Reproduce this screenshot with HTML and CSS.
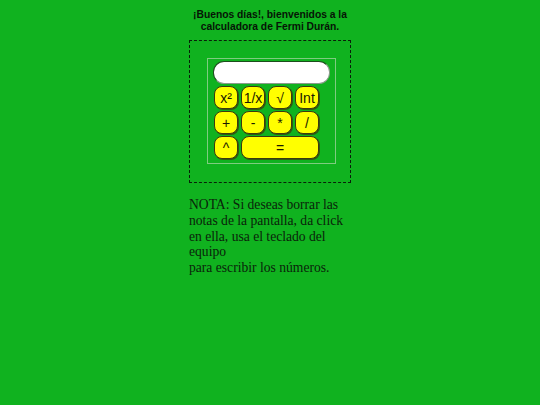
FILE: index.html
```html
<!DOCTYPE html>
<html lang="es">
<head>
<meta charset="utf-8">
<link rel="stylesheet" href="styles.css">
</head>
<body>
<div class="page">
  <h1 class="title">¡Buenos días!, bienvenidos a la calculadora de Fermi Durán.</h1>
  <div class="frame">
    <div class="calc">
      <div class="display"></div>
      <div class="keys">
        <div class="key">x²</div>
        <div class="key">1/x</div>
        <div class="key">√</div>
        <div class="key">Int</div>
        <div class="key">+</div>
        <div class="key">-</div>
        <div class="key">*</div>
        <div class="key">/</div>
        <div class="key">^</div>
        <div class="key wide">=</div>
      </div>
    </div>
  </div>
  <p class="note">NOTA: Si deseas borrar las notas de la pantalla, da click en ella, usa el teclado del equipo<br>para escribir los números.</p>
</div>
</body>
</html>
```
FILE: styles.css
```css
html, body {
  margin: 0;
  padding: 0;
  background: #10b21f;
}
body {
  padding-top: 9px;
}
.page {
  width: 162px;
  margin-left: 189px;
  display: flex;
  flex-direction: column;
}
.title {
  margin: 0;
  font-family: "Liberation Sans", Arial, sans-serif;
  font-weight: bold;
  font-size: 10.3px;
  line-height: 12px;
  text-align: center;
  color: #061506;
}
.frame {
  margin-top: 7px;
  border: 1px dashed #0a1f0a;
  padding: 17px 14px 18px 17px;
  display: flex;
}
.calc {
  width: 128px;
  border: 1px solid #7fcc80;
  padding: 2px 5px 4px 5px;
  display: flex;
  flex-direction: column;
  gap: 2px;
}
.display {
  height: 21px;
  width: 115px;
  background: #fff;
  border: 1px solid #1d4d1d;
  border-right-color: #8a9a8a;
  border-bottom-color: #8a9a8a;
  border-radius: 11px;
}
.keys {
  display: grid;
  grid-template-columns: repeat(4, 24px);
  grid-auto-rows: 23px;
  column-gap: 3px;
  row-gap: 2px;
  padding-left: 1px;
}
.key {
  box-sizing: border-box;
  background: #ffff00;
  border: 1px solid #3a3a10;
  border-radius: 8px;
  display: flex;
  align-items: center;
  justify-content: center;
  font-family: "Liberation Sans", Arial, sans-serif;
  font-size: 14px;
  color: #1a1a00;
  box-shadow: 1px 1px 0 #2f5a10;
}
.key.wide {
  grid-column: span 3;
}
.note {
  margin: 14px 0 0 0;
  font-family: "Liberation Serif", "Times New Roman", serif;
  font-size: 13.6px;
  line-height: 15.75px;
  color: #0a240a;
}
```
